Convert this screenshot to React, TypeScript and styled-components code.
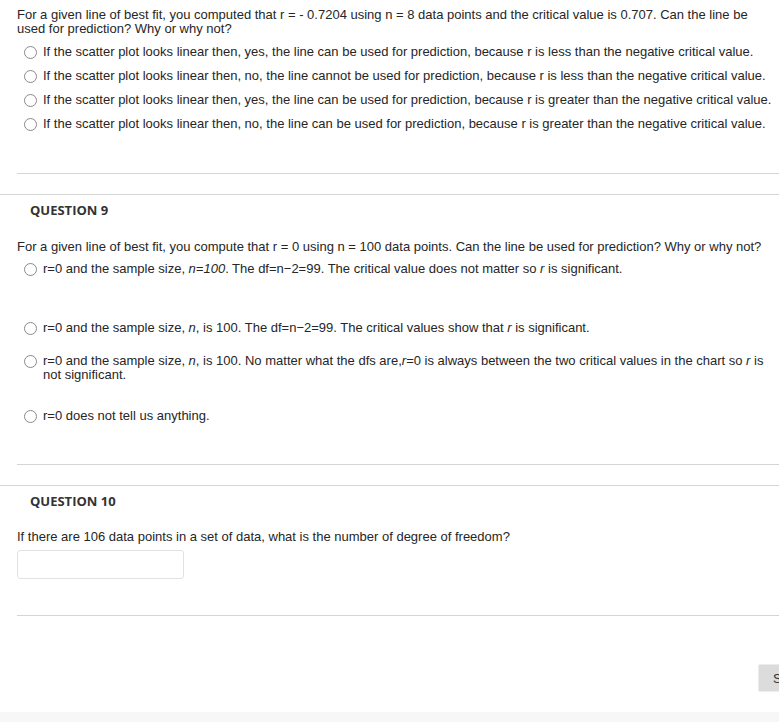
import React from "react";
import styled, { createGlobalStyle } from "styled-components";

const GlobalStyle = createGlobalStyle`
  html, body {
    margin: 0;
    padding: 0;
    background: #fff;
    overflow: hidden;
  }
  body {
    font-family: "Liberation Sans", Arial, sans-serif;
    font-size: 13px;
    color: #262626;
  }
`;

const Page = styled.div`
  display: flex;
  flex-direction: column;
  width: 779px;
  padding-top: 8px;
`;

const Content = styled.div`
  padding: 0 6px 0 17px;
`;

const Prompt = styled.p<{ $top?: number }>`
  margin: ${(p) => p.$top ?? 0}px 0 0;
  line-height: 14px;
`;

const Options = styled.div<{ $top: number; $indent: number }>`
  display: flex;
  flex-direction: column;
  margin-top: ${(p) => p.$top}px;
  padding-left: ${(p) => p.$indent}px;
`;

const Option = styled.label<{ $after?: number }>`
  display: flex;
  align-items: flex-start;
  gap: 6px;
  line-height: 14px;
  margin-bottom: ${(p) => p.$after ?? 0}px;
`;

const Radio = styled.span`
  flex: none;
  width: 11px;
  height: 11px;
  margin-top: 1px;
  border: 1px solid #8a8a8a;
  border-radius: 50%;
  background: #fff;
`;

const Divider = styled.div<{ $top: number }>`
  height: 1px;
  margin: ${(p) => p.$top}px 0 0 17px;
  background: #d4d4d4;
`;

const QuestionBlock = styled.section<{ $top: number }>`
  margin-top: ${(p) => p.$top}px;
  border-top: 1px solid #d4d4d4;
  padding-top: 7px;
`;

const QuestionTitle = styled.h3`
  margin: 0;
  padding-left: 30px;
  font-family: "Open Sans", "Liberation Sans", sans-serif;
  font-size: 13px;
  font-weight: 700;
  line-height: 16px;
  color: #333;
`;

const AnswerBox = styled.input`
  display: block;
  box-sizing: border-box;
  width: 167px;
  height: 29px;
  margin-top: 6px;
  border: 1px solid #e2e2e2;
  border-radius: 3px;
  background: #fff;
`;

const Footer = styled.div`
  display: flex;
  justify-content: flex-start;
  margin-top: 48px;
  padding-left: 758px;
  overflow: hidden;
`;

const SaveButton = styled.button`
  flex: none;
  height: 28px;
  padding: 0 14px;
  border: 1px solid #ececec;
  border-radius: 2px;
  background: #dcdcdc;
  font-family: "Liberation Sans", Arial, sans-serif;
  font-size: 13px;
  color: #333;
  white-space: nowrap;
`;

const BottomStrip = styled.div`
  height: 11px;
  margin-top: 20px;
  background: #f7f7f7;
`;

const q8Options = [
  "If the scatter plot looks linear then, yes, the line can be used for prediction, because r is less than the negative critical value.",
  "If the scatter plot looks linear then, no, the line cannot be used for prediction, because r is less than the negative critical value.",
  "If the scatter plot looks linear then, yes, the line can be used for prediction, because r is greater than the negative critical value.",
  "If the scatter plot looks linear then, no, the line can be used for prediction, because r is greater than the negative critical value.",
];

export default function App() {
  return (
    <>
      <GlobalStyle />
      <Page>
        <Content>
          <Prompt>
            For a given line of best fit, you computed that r = - 0.7204 using n = 8 data points and the
            critical value is 0.707. Can the line be used for prediction? Why or why not?
          </Prompt>
          <Options $top={9} $indent={7}>
            {q8Options.map((text, i) => (
              <Option key={i} $after={i < q8Options.length - 1 ? 10 : 0}>
                <Radio />
                <span>{text}</span>
              </Option>
            ))}
          </Options>
        </Content>
        <Divider $top={42} />

        <QuestionBlock $top={20}>
          <QuestionTitle>QUESTION 9</QuestionTitle>
          <Content>
            <Prompt $top={22}>
              For a given line of best fit, you compute that r = 0 using n = 100 data points. Can the line be
              used for prediction? Why or why not?
            </Prompt>
            <Options $top={8} $indent={7}>
              <Option $after={45}>
                <Radio />
                <span>
                  r=0 and the sample size, <i>n=100</i>. The df=n−2=99. The critical value does not matter so{" "}
                  <i>r</i> is significant.
                </span>
              </Option>
              <Option $after={19}>
                <Radio />
                <span>
                  r=0 and the sample size, <i>n</i>, is 100. The df=n−2=99. The critical values show that{" "}
                  <i>r</i> is significant.
                </span>
              </Option>
              <Option $after={27}>
                <Radio />
                <span>
                  r=0 and the sample size, <i>n</i>, is 100. No matter what the dfs are,<i>r</i>=0 is always
                  between the two critical values in the chart so <i>r</i> is not significant.
                </span>
              </Option>
              <Option>
                <Radio />
                <span>r=0 does not tell us anything.</span>
              </Option>
            </Options>
          </Content>
        </QuestionBlock>
        <Divider $top={41} />

        <QuestionBlock $top={20}>
          <QuestionTitle>QUESTION 10</QuestionTitle>
          <Content>
            <Prompt $top={21}>
              If there are 106 data points in a set of data, what is the number of degree of freedom?
            </Prompt>
            <AnswerBox type="text" aria-label="Answer" />
          </Content>
        </QuestionBlock>
        <Divider $top={36} />

        <Footer>
          <SaveButton type="button">Save All Answers</SaveButton>
        </Footer>
        <BottomStrip />
      </Page>
    </>
  );
}
